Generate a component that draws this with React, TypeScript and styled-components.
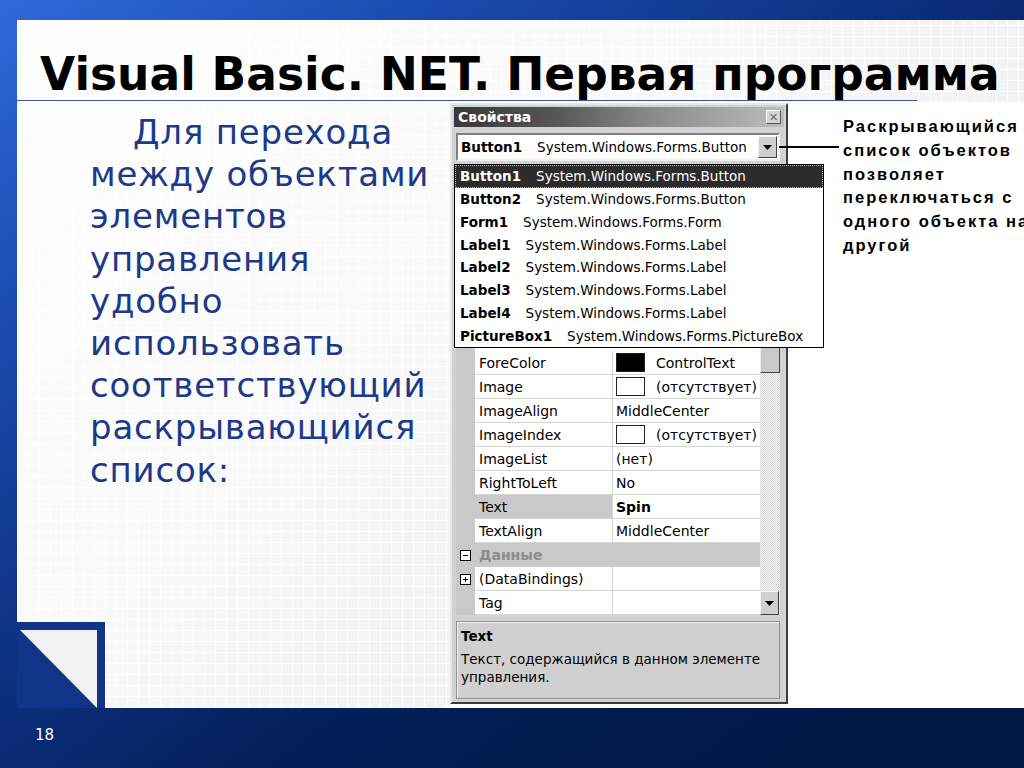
import React from "react";
import styled, { createGlobalStyle } from "styled-components";

const Global = createGlobalStyle`
  html, body { margin: 0; padding: 0; width: 1024px; height: 768px; overflow: hidden; }
  #root { width: 1024px; height: 768px; }
`;

const Page = styled.div`
  width: 1024px;
  height: 768px;
  display: flex;
  flex-direction: column;
  background: linear-gradient(to bottom right, #3069d8 0%, #1a4aad 22%, #0c2f7e 45%, #03205a 62%, #001a4a 80%, #001844 100%);
  font-family: "DejaVu Sans", Verdana, sans-serif;
`;

const Slide = styled.div`
  flex: 1;
  display: flex;
  padding: 20px 0 0 17px;
  min-height: 0;
`;

const Panel = styled.div`
  flex: 1;
  position: relative;
  display: flex;
  flex-direction: column;
  background:
    linear-gradient(135deg, rgba(255,255,255,0.97) 0%, rgba(255,255,255,0.75) 35%, rgba(255,255,255,0.25) 75%),
    repeating-linear-gradient(90deg, rgba(255,255,255,0.9) 0 1px, transparent 1px 11px),
    repeating-linear-gradient(0deg, rgba(255,255,255,0.9) 0 1px, transparent 1px 11px),
    #ebebeb;
`;

const TitleRow = styled.div`
  height: 81px;
  box-sizing: border-box;
  padding: 32px 0 0 23px;
  width: 900px;
  border-bottom: 1px solid #3c5a98;
`;

const Title = styled.h1`
  margin: 0;
  font-family: "DejaVu Sans", Verdana, sans-serif;
  font-weight: bold;
  font-size: 45.5px;
  line-height: 1;
  color: #000;
  white-space: nowrap;
`;

const Body = styled.div`
  flex: 1;
  display: flex;
  min-height: 0;
`;

const LeftText = styled.p`
  width: 433px;
  box-sizing: border-box;
  margin: 0;
  padding: 10px 0 0 73px;
  font-family: "DejaVu Sans", Verdana, sans-serif;
  font-size: 34px;
  letter-spacing: 0.8px;
  line-height: 42.2px;
  color: #1c3a8a;
  text-indent: 43px;
  white-space: nowrap;
`;

const ImageBlock = styled.div`
  flex: 1;
  margin-top: 2px;
  background: #fff;
  display: flex;
  align-items: flex-start;
`;

const Window = styled.div`
  position: relative;
  width: 338px;
  box-sizing: border-box;
  padding: 2px 2px 3px;
  background: #d2d2d2;
  border: 2px solid;
  border-color: #e8e8e8 #3c3c3c #3c3c3c #e8e8e8;
  font-family: "DejaVu Sans", Tahoma, sans-serif;
  color: #000;
`;

const TitleBar = styled.div`
  height: 20px;
  display: flex;
  align-items: center;
  justify-content: space-between;
  padding: 0 3px 0 4px;
  background: linear-gradient(90deg, #383838 0%, #555 30%, #8a8a8a 60%, #bdbdbd 100%);
  color: #fff;
  font-weight: bold;
  font-size: 14px;
`;

const CloseBtn = styled.span`
  width: 15px;
  height: 14px;
  box-sizing: border-box;
  display: flex;
  align-items: center;
  justify-content: center;
  background: #d4d4d4;
  border: 1px solid;
  border-color: #fff #555 #555 #fff;
  color: #666;
  font-size: 11px;
  font-weight: bold;
  line-height: 1;
`;

const Combo = styled.div`
  margin: 6px 4px 0 2px;
  height: 28px;
  box-sizing: border-box;
  display: flex;
  align-items: center;
  background: #fff;
  border: 2px solid;
  border-color: #808080 #f0f0f0 #f0f0f0 #808080;
  padding: 0 1px 0 3px;
  font-size: 13.5px;
`;

const Name = styled.b`
  font-weight: bold;
  margin-right: 15px;
`;

const ComboText = styled.span`
  flex: 1;
  white-space: nowrap;
`;

const ArrowBtn = styled.span<{ $h?: number }>`
  width: 19px;
  height: ${(p) => p.$h ?? 22}px;
  box-sizing: border-box;
  display: flex;
  align-items: center;
  justify-content: center;
  background: #cfcfcf;
  border: 1px solid;
  border-color: #f4f4f4 #404040 #404040 #f4f4f4;
`;

const Tri = () => (
  <svg width="9" height="5" viewBox="0 0 9 5"><path d="M0 0h9L4.5 5z" fill="#000" /></svg>
);

const GridArea = styled.div`
  margin: 4px 4px 0 2px;
  height: 450px;
  display: flex;
  flex-direction: column;
`;

const Toolbar = styled.div`
  height: 42px;
  background: #d2d2d2;
`;

const GridMain = styled.div`
  flex: 1;
  display: flex;
  background: #fff;
`;

const Table = styled.div`
  flex: 1;
  display: flex;
  flex-direction: column;
`;

const HiddenRows = styled.div`
  height: 144px;
  border-left: 19px solid #c9c9c9;
  background: #fff;
`;

const Row = styled.div<{ $cat?: boolean }>`
  height: 24px;
  display: flex;
  font-size: 14px;
  background: ${(p) => (p.$cat ? "#c9c9c9" : "#fff")};
`;

const Gutter = styled.span`
  width: 19px;
  flex: none;
  background: #c9c9c9;
  display: flex;
  align-items: center;
  justify-content: center;
`;

const NameCell = styled.span<{ $sel?: boolean }>`
  width: 138px;
  flex: none;
  box-sizing: border-box;
  padding-left: 4px;
  display: flex;
  align-items: center;
  border-bottom: 1px solid #d6d6d6;
  border-right: 1px solid #d6d6d6;
  background: ${(p) => (p.$sel ? "#c9c9c9" : "transparent")};
  white-space: nowrap;
`;

const ValueCell = styled.span<{ $bold?: boolean }>`
  flex: 1;
  box-sizing: border-box;
  padding-left: 3px;
  display: flex;
  align-items: center;
  border-bottom: 1px solid #d6d6d6;
  font-weight: ${(p) => (p.$bold ? "bold" : "normal")};
  white-space: nowrap;
`;

const CatLabel = styled.span`
  padding-left: 4px;
  display: flex;
  align-items: center;
  font-weight: bold;
  color: #8c8c8c;
`;

const Swatch = styled.span<{ $c: string }>`
  width: 29px;
  height: 19px;
  box-sizing: border-box;
  border: 1px solid #222;
  background: ${(p) => p.$c};
  margin-right: 11px;
`;

const ScrollBar = styled.div`
  width: 20px;
  display: flex;
  flex-direction: column;
  background: repeating-conic-gradient(#d8d8d8 0 25%, #f6f6f6 0 50%) 0 0 / 2px 2px;
`;

const TrackGap = styled.div`
  height: 99px;
`;

const Thumb = styled.div`
  height: 45px;
  box-sizing: border-box;
  background: #c9c9c9;
  border: 1px solid;
  border-color: #eee #444 #444 #eee;
`;

const TrackFill = styled.div`
  flex: 1;
`;

const Desc = styled.div`
  margin: 6px 4px 0 2px;
  height: 78px;
  box-sizing: border-box;
  padding: 5px 4px;
  background: #d0d0d0;
  border: 1px solid #909090;
  box-shadow: inset 1px 1px 0 #f0f0f0;
  font-size: 13.5px;
  line-height: 18px;
`;

const DescTitle = styled.div`
  font-weight: bold;
  margin-bottom: 5px;
`;

const List = styled.div`
  position: absolute;
  left: 2px;
  top: 59px;
  width: 370px;
  box-sizing: border-box;
  background: #fff;
  border: 1px solid #000;
  z-index: 2;
`;

const ListRow = styled.div<{ $sel?: boolean }>`
  height: 22.75px;
  box-sizing: border-box;
  display: flex;
  align-items: center;
  padding-left: 4px;
  font-size: 13.5px;
  white-space: nowrap;
  background: ${(p) => (p.$sel ? "#2c2c2c" : "#fff")};
  color: ${(p) => (p.$sel ? "#fff" : "#000")};
  border: 1px ${(p) => (p.$sel ? "dotted #bbb" : "solid transparent")};
`;

const Connector = styled.span`
  position: absolute;
  left: 327px;
  top: 41px;
  width: 60px;
  height: 2px;
  background: #000;
  z-index: 3;
`;

const Annotation = styled.p`
  margin: 12px 0 0 55px;
  font-family: "Liberation Sans", Arial, sans-serif;
  font-weight: bold;
  font-size: 16.5px;
  letter-spacing: 2px;
  line-height: 23.8px;
  color: #000;
  white-space: nowrap;
`;

const Corner = styled.svg`
  position: absolute;
  left: 0;
  bottom: 0;
`;

const Footer = styled.div`
  height: 60px;
  display: flex;
  align-items: center;
  padding: 0 0 6px 35px;
  box-sizing: border-box;
  color: #fff;
  font-family: "DejaVu Sans", Verdana, sans-serif;
  font-size: 15px;
`;

const BoxIcon = ({ plus }: { plus?: boolean }) => (
  <svg width="11" height="11" viewBox="0 0 11 11">
    <rect x="0.5" y="0.5" width="10" height="10" fill="#fff" stroke="#000" />
    <path d="M3 5.5h5" stroke="#000" />
    {plus && <path d="M5.5 3v5" stroke="#000" />}
  </svg>
);

type Prop = {
  name?: string;
  value?: string;
  swatch?: string;
  cat?: string;
  sel?: boolean;
  bold?: boolean;
  plus?: boolean;
};

const props: Prop[] = [
  { name: "ForeColor", value: "ControlText", swatch: "#000" },
  { name: "Image", value: "(отсутствует)", swatch: "#fff" },
  { name: "ImageAlign", value: "MiddleCenter" },
  { name: "ImageIndex", value: "(отсутствует)", swatch: "#fff" },
  { name: "ImageList", value: "(нет)" },
  { name: "RightToLeft", value: "No" },
  { name: "Text", value: "Spin", sel: true, bold: true },
  { name: "TextAlign", value: "MiddleCenter" },
  { cat: "Данные" },
  { name: "(DataBindings)", value: "", plus: true },
  { name: "Tag", value: "" },
];

const objects: [string, string][] = [
  ["Button1", "System.Windows.Forms.Button"],
  ["Button2", "System.Windows.Forms.Button"],
  ["Form1", "System.Windows.Forms.Form"],
  ["Label1", "System.Windows.Forms.Label"],
  ["Label2", "System.Windows.Forms.Label"],
  ["Label3", "System.Windows.Forms.Label"],
  ["Label4", "System.Windows.Forms.Label"],
  ["PictureBox1", "System.Windows.Forms.PictureBox"],
];

export default function App() {
  return (
    <Page>
      <Global />
      <Slide>
        <Panel>
          <TitleRow>
            <Title>Visual Basic. NET. Первая программа</Title>
          </TitleRow>
          <Body>
            <LeftText>
              Для перехода<br />
              между объектами<br />
              элементов<br />
              управления<br />
              удобно<br />
              использовать<br />
              соответствующий<br />
              раскрывающийся<br />
              список:
            </LeftText>
            <ImageBlock>
              <Window>
                <TitleBar>
                  <span>Свойства</span>
                  <CloseBtn>✕</CloseBtn>
                </TitleBar>
                <Combo>
                  <Name>Button1</Name>
                  <ComboText>System.Windows.Forms.Button</ComboText>
                  <ArrowBtn>
                    <Tri />
                  </ArrowBtn>
                </Combo>
                <GridArea>
                  <Toolbar />
                  <GridMain>
                    <Table>
                      <HiddenRows />
                      {props.map((p, i) =>
                        p.cat ? (
                          <Row key={i} $cat>
                            <Gutter>
                              <BoxIcon />
                            </Gutter>
                            <CatLabel>{p.cat}</CatLabel>
                          </Row>
                        ) : (
                          <Row key={i}>
                            <Gutter>{p.plus && <BoxIcon plus />}</Gutter>
                            <NameCell $sel={p.sel}>{p.name}</NameCell>
                            <ValueCell $bold={p.bold}>
                              {p.swatch && <Swatch $c={p.swatch} />}
                              {p.value}
                            </ValueCell>
                          </Row>
                        )
                      )}
                    </Table>
                    <ScrollBar>
                      <ArrowBtn $h={22} />
                      <TrackGap />
                      <Thumb />
                      <TrackFill />
                      <ArrowBtn $h={24}>
                        <Tri />
                      </ArrowBtn>
                    </ScrollBar>
                  </GridMain>
                </GridArea>
                <Desc>
                  <DescTitle>Text</DescTitle>
                  Текст, содержащийся в данном элементе управления.
                </Desc>
                <List>
                  {objects.map(([n, t], i) => (
                    <ListRow key={n} $sel={i === 0}>
                      <Name>{n}</Name>
                      <span>{t}</span>
                    </ListRow>
                  ))}
                </List>
                <Connector />
              </Window>
              <Annotation>
                Раскрывающийся<br />
                список объектов<br />
                позволяет<br />
                переключаться с<br />
                одного объекта на<br />
                другой
              </Annotation>
            </ImageBlock>
          </Body>
          <Corner width="88" height="86" viewBox="0 0 88 86">
            <rect x="0" y="0" width="88" height="86" fill="#0f3488" />
            <polygon points="3,8 80,8 80,86" fill="#f2f2f2" />
          </Corner>
        </Panel>
      </Slide>
      <Footer>18</Footer>
    </Page>
  );
}
